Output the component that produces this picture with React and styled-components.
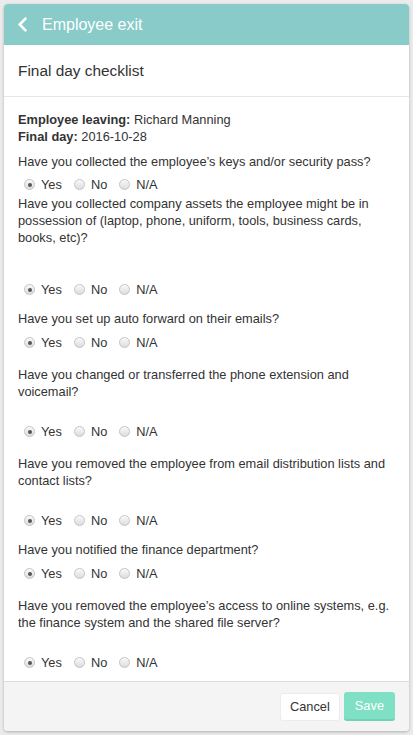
import styled, { createGlobalStyle } from "styled-components";
import { FaChevronLeft } from "react-icons/fa";

const questions = [
  {
    text: "Have you collected the employee’s keys and/or security pass?",
    before: 0,
    space: 6,
  },
  {
    text: "Have you collected company assets the employee might be in possession of (laptop, phone, uniform, tools, business cards, books, etc)?",
    before: 2,
    space: 35,
  },
  { text: "Have you set up auto forward on their emails?", before: 12, space: 7 },
  {
    text: "Have you changed or transferred the phone extension and voicemail?",
    before: 15,
    space: 23,
  },
  {
    text: "Have you removed the employee from email distribution lists and contact lists?",
    before: 15,
    space: 23,
  },
  { text: "Have you notified the finance department?", before: 12, space: 7 },
  {
    text: "Have you removed the employee’s access to online systems, e.g. the finance system and the shared file server?",
    before: 15,
    space: 23,
  },
];

const options = ["Yes", "No", "N/A"];

export default function App() {
  return (
    <>
      <GlobalStyle />
      <Card>
        <Header>
          <BackIcon>
            <FaChevronLeft />
          </BackIcon>
          <HeaderTitle>Employee exit</HeaderTitle>
        </Header>

        <SubHeader>Final day checklist</SubHeader>

        <Body>
          <Info>
            <div>
              <b>Employee leaving:</b> Richard Manning
            </div>
            <div>
              <b>Final day:</b> 2016-10-28
            </div>
          </Info>

          {questions.map((q, i) => (
            <Question key={i} before={q.before}>
              <QuestionText>{q.text}</QuestionText>
              <RadioRow space={q.space}>
                {options.map((opt) => (
                  <RadioLabel key={opt}>
                    <Radio checked={opt === "Yes"} />
                    {opt}
                  </RadioLabel>
                ))}
              </RadioRow>
            </Question>
          ))}
        </Body>

        <Footer>
          <CancelButton type="button">Cancel</CancelButton>
          <SaveButton type="button">Save</SaveButton>
        </Footer>
      </Card>
    </>
  );
}

const GlobalStyle = createGlobalStyle`
  html, body {
    margin: 0;
    padding: 0;
    background-color: #ebebeb;
  }
  body {
    padding: 4px;
    font-family: "Liberation Sans", Arial, sans-serif;
    color: #333;
  }
  * {
    box-sizing: border-box;
  }
`;

const Card = styled.div`
  width: 405px;
  height: 727px;
  display: flex;
  flex-direction: column;
  background-color: #fff;
  border-radius: 4px;
  overflow: hidden;
  box-shadow: 0 1px 3px rgba(0, 0, 0, 0.25);
`;

const Header = styled.div`
  height: 41px;
  flex-shrink: 0;
  display: flex;
  align-items: center;
  padding-left: 10px;
  background-color: #88cbc9;
  color: #fff;
`;

const BackIcon = styled.span`
  display: flex;
  font-size: 17px;
  margin-right: 11px;
`;

const HeaderTitle = styled.span`
  font-size: 16px;
`;

const SubHeader = styled.div`
  height: 52px;
  flex-shrink: 0;
  display: flex;
  align-items: center;
  padding-left: 14px;
  font-size: 15.4px;
  color: #333;
  border-bottom: 1px solid #e6e6e6;
`;

const Body = styled.div`
  flex: 1;
  padding: 14px 14px 0 14px;
  font-size: 12.8px;
  line-height: 17px;
`;

const Info = styled.div`
  margin-bottom: 8px;
`;

const Question = styled.div`
  margin-top: ${(props) => props.before}px;
`;

const QuestionText = styled.div`
  color: #333;
`;

const RadioRow = styled.div`
  display: flex;
  align-items: center;
  gap: 12px;
  padding-left: 6px;
  margin-top: ${(props) => props.space}px;
`;

const RadioLabel = styled.label`
  display: flex;
  align-items: center;
  gap: 6px;
  color: #333;
`;

const Radio = styled.span`
  width: 11px;
  height: 11px;
  border-radius: 50%;
  border: 1px solid #c4c4c4;
  background: linear-gradient(#fafafa, #dcdcdc);
  display: flex;
  align-items: center;
  justify-content: center;
  &::after {
    content: "";
    width: 4px;
    height: 4px;
    border-radius: 50%;
    background-color: #555;
    display: ${(props) => (props.checked ? "block" : "none")};
  }
`;

const Footer = styled.div`
  height: 50px;
  flex-shrink: 0;
  display: flex;
  align-items: center;
  justify-content: flex-end;
  gap: 4px;
  padding-right: 14px;
  background-color: #f4f4f4;
  border-top: 1px solid #dcdcdc;
`;

const CancelButton = styled.button`
  height: 28px;
  padding: 0 9px;
  font-family: inherit;
  font-size: 12.8px;
  color: #333;
  background-color: #fff;
  border: 1px solid #ececec;
  border-radius: 3px;
`;

const SaveButton = styled.button`
  height: 29px;
  padding: 0 11px;
  font-family: inherit;
  font-size: 12.8px;
  color: #fff;
  background-color: #80e0c5;
  border: none;
  border-bottom: 2px solid #6fd2b5;
  border-radius: 3px;
`;
